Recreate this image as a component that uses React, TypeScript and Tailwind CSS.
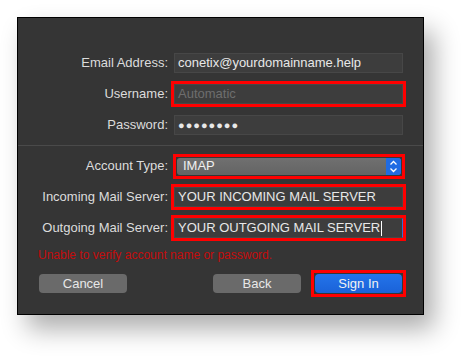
import React from 'react';

const Label: React.FC<{ children: React.ReactNode }> = ({ children }) => (
  <div className="w-[156px] pr-[6px] text-right text-[13px] text-[#dcdcdc]">{children}</div>
);

// red annotation frame drawn over a control
const RedBox: React.FC = () => (
  <span className="pointer-events-none absolute -inset-[4px] border-[3px] border-[#ff0000]" />
);

const Field: React.FC<{ children?: React.ReactNode; highlight?: boolean; className?: string }> = ({
  children,
  highlight,
  className = '',
}) => (
  <div
    className={`relative flex h-[20px] w-[229px] items-center border border-[#474747] bg-[#3d3d3d] px-[3px] text-[13px] text-[#e8e8e8] ${className}`}
  >
    {children}
    {highlight && <RedBox />}
  </div>
);

const App: React.FC = () => {
  return (
    <div
      className="h-[363px] w-[472px] bg-white pl-[17px] pt-[17px]"
      style={{ fontFamily: '"Liberation Sans", Arial, sans-serif' }}
    >
      <div className="h-[298px] w-[407px] border border-black bg-[#353535] shadow-[10px_14px_24px_rgba(0,0,0,0.32)]">
        {/* Account section */}
        <div className="flex flex-col gap-[11px] pt-[35px]">
          <div className="flex items-center">
            <Label>Email Address:</Label>
            <Field>conetix@yourdomainname.help</Field>
          </div>
          <div className="flex items-center">
            <Label>Username:</Label>
            <Field highlight>
              <span className="text-[#6e6e6e]">Automatic</span>
            </Field>
          </div>
          <div className="flex items-center">
            <Label>Password:</Label>
            <Field>
              <span className="text-[11px] tracking-[1px]">●●●●●●●●</span>
            </Field>
          </div>
        </div>

        <div className="mt-[10px] h-px bg-[#4a4a4a]" />

        {/* Server section */}
        <div className="mt-[10px] flex flex-col gap-[11px]">
          <div className="flex h-[20px] items-center">
            <Label>Account Type:</Label>
            <div className="relative ml-[3px] flex h-[17px] w-[224px] items-center justify-between rounded-[3px] bg-gradient-to-b from-[#707070] to-[#646464]">
              <span className="pl-[6px] text-[13px] text-[#f0f0f0]">IMAP</span>
              <div className="flex h-[17px] w-[15px] items-center justify-center rounded-r-[3px] bg-[#1f6be3]">
                <svg width="9" height="13" viewBox="0 0 9 13" fill="none" stroke="#fff" strokeWidth="1.3">
                  <path d="M1.5 4.5 L4.5 1.5 L7.5 4.5" />
                  <path d="M1.5 8.5 L4.5 11.5 L7.5 8.5" />
                </svg>
              </div>
              <RedBox />
            </div>
          </div>
          <div className="flex items-center">
            <Label>Incoming Mail Server:</Label>
            <Field highlight>YOUR INCOMING MAIL SERVER</Field>
          </div>
          <div className="flex items-center">
            <Label>Outgoing Mail Server:</Label>
            <Field highlight className="border-r-[#2d6fd6]">
              YOUR OUTGOING MAIL SERVER
              <span className="ml-px h-[15px] w-px bg-white" />
            </Field>
          </div>
        </div>

        <div className="mt-[10px] pl-[20px] text-[12px] leading-[15px] text-[#c40c0c]">
          Unable to verify account name or password.
        </div>

        {/* Buttons */}
        <div className="mt-[11px] flex items-center px-[21px]">
          <button className="h-[19px] w-[88px] rounded-[4px] bg-[#6a6a6a] text-[13px] text-[#e8e8e8]">Cancel</button>
          <div className="flex-1" />
          <button className="h-[19px] w-[88px] rounded-[4px] bg-[#6a6a6a] text-[13px] text-[#e8e8e8]">Back</button>
          <button className="relative ml-[14px] h-[19px] w-[87px] rounded-[4px] bg-gradient-to-b from-[#2474ea] to-[#1a62d8] text-[13px] text-[#f2f2f2]">
            Sign In
            <RedBox />
          </button>
        </div>
      </div>
    </div>
  );
};

export default App;
